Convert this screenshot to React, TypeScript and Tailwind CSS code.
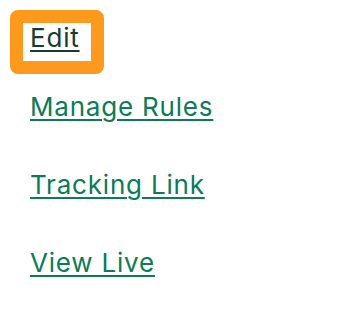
export default function App() {
  const links = ['Manage Rules', 'Tracking Link', 'View Live'];
  return (
    <div className="w-[348px] h-[315px] bg-white" style={{ fontFamily: 'Inter, "Noto Sans", sans-serif' }}>
      <div className="pt-[10px] pl-[10px]">
        <div className="inline-block border-[13px] border-[#fd9a1e] rounded-[8px] bg-white pl-[7px] pr-[11px] pt-[1px] pb-[9px]">
          <a href="#" className="block text-[26px] leading-[28px] tracking-[0.8px] text-[#173c30] underline decoration-2 underline-offset-[3px]">
            Edit
          </a>
        </div>
      </div>
      <ul className="pl-[30px] pt-[19px] flex flex-col gap-[47px]">
        {links.map((l) => (
          <li key={l} className="leading-[28px]">
            <a href="#" className="text-[26px] leading-[28px] tracking-[0.8px] text-[#0b7b58] underline decoration-2 underline-offset-[3px]">
              {l}
            </a>
          </li>
        ))}
      </ul>
    </div>
  );
}
